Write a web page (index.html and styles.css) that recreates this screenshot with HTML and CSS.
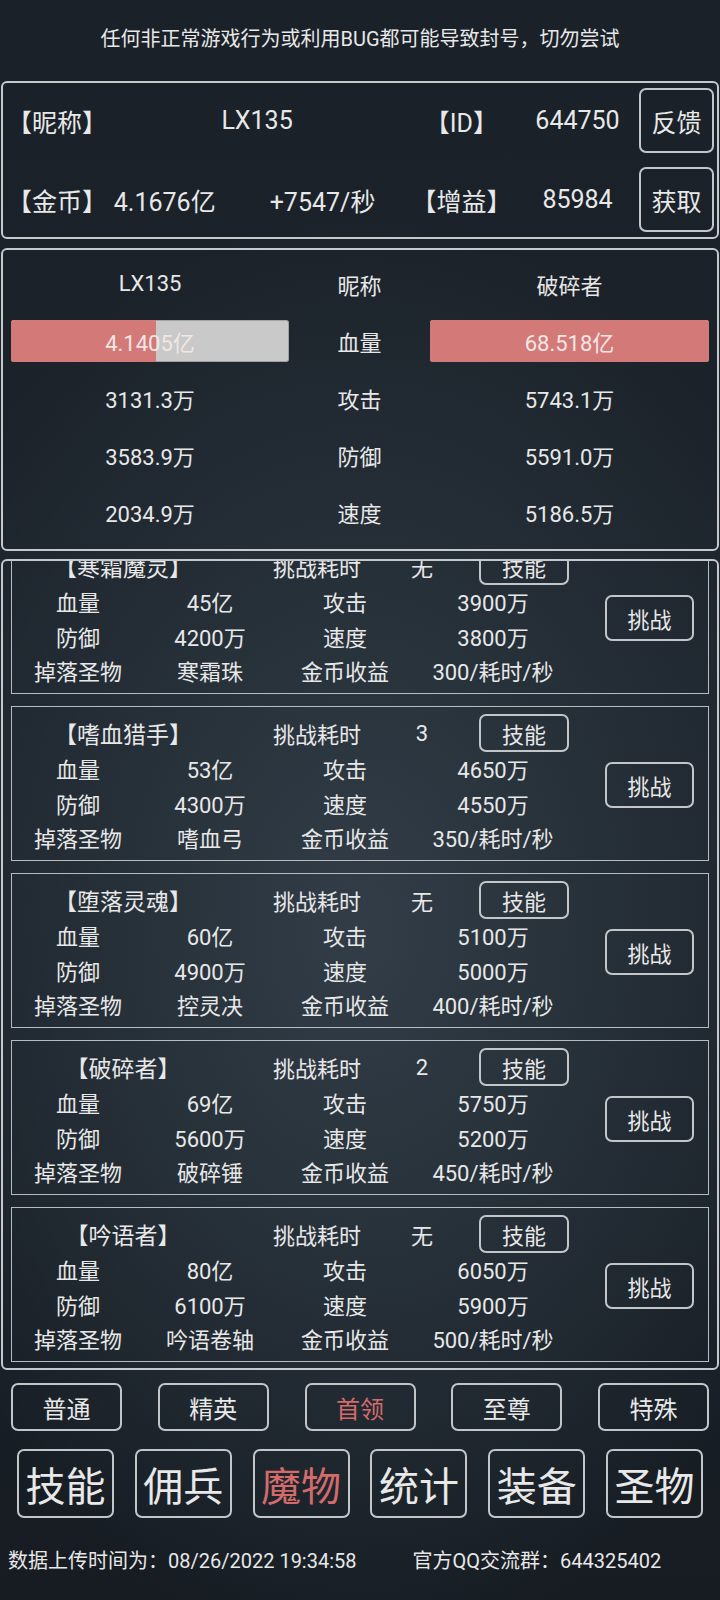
FILE: index.html
```html
<!DOCTYPE html>
<html lang="zh-CN">
<head>
<meta charset="utf-8">
<title>魔物</title>
<link rel="stylesheet" href="styles.css">
</head>
<body>
<div class="page">
  <div class="notice">任何非正常游戏行为或利用BUG都可能导致封号，切勿尝试</div>

  <div class="panel info">
    <div class="info-row">
      <div class="c-label">【昵称】</div>
      <div class="c-wide">LX135</div>
      <div class="c-label2">【ID】</div>
      <div class="c-val2">644750</div>
      <div class="c-btn"><div class="btn info-btn">反馈</div></div>
    </div>
    <div class="info-row">
      <div class="c-label">【金币】</div>
      <div class="c-v1">4.1676亿</div>
      <div class="c-v2">+7547/秒</div>
      <div class="c-label2">【增益】</div>
      <div class="c-val2">85984</div>
      <div class="c-btn"><div class="btn info-btn">获取</div></div>
    </div>
  </div>

  <div class="panel battle">
    <div class="b-cell">LX135</div>
    <div class="b-cell">昵称</div>
    <div class="b-cell">破碎者</div>

    <div class="b-cell"><div class="bar"><div class="bar-fill" style="width:52%"></div><span class="bar-text">4.1405亿</span></div></div>
    <div class="b-cell">血量</div>
    <div class="b-cell"><div class="bar"><div class="bar-fill" style="width:100%"></div><span class="bar-text">68.518亿</span></div></div>

    <div class="b-cell">3131.3万</div>
    <div class="b-cell">攻击</div>
    <div class="b-cell">5743.1万</div>

    <div class="b-cell">3583.9万</div>
    <div class="b-cell">防御</div>
    <div class="b-cell">5591.0万</div>

    <div class="b-cell">2034.9万</div>
    <div class="b-cell">速度</div>
    <div class="b-cell">5186.5万</div>
  </div>

  <div class="panel list">
    <div class="list-scroll">
      <div class="card">
        <div class="card-head">
          <div class="h-name">【寒霜魔灵】</div>
          <div class="h-label">挑战耗时</div>
          <div class="h-val">无</div>
          <div class="btn skill-btn">技能</div>
        </div>
        <div class="card-body">
          <div class="k">血量</div><div class="v">45亿</div><div class="k2">攻击</div><div class="v2">3900万</div>
          <div class="k">防御</div><div class="v">4200万</div><div class="k2">速度</div><div class="v2">3800万</div>
          <div class="k">掉落圣物</div><div class="v">寒霜珠</div><div class="k2">金币收益</div><div class="v2">300/耗时/秒</div>
          <div class="fight-cell"><div class="btn fight-btn">挑战</div></div>
        </div>
      </div>

      <div class="card">
        <div class="card-head">
          <div class="h-name">【嗜血猎手】</div>
          <div class="h-label">挑战耗时</div>
          <div class="h-val">3</div>
          <div class="btn skill-btn">技能</div>
        </div>
        <div class="card-body">
          <div class="k">血量</div><div class="v">53亿</div><div class="k2">攻击</div><div class="v2">4650万</div>
          <div class="k">防御</div><div class="v">4300万</div><div class="k2">速度</div><div class="v2">4550万</div>
          <div class="k">掉落圣物</div><div class="v">嗜血弓</div><div class="k2">金币收益</div><div class="v2">350/耗时/秒</div>
          <div class="fight-cell"><div class="btn fight-btn">挑战</div></div>
        </div>
      </div>

      <div class="card">
        <div class="card-head">
          <div class="h-name">【堕落灵魂】</div>
          <div class="h-label">挑战耗时</div>
          <div class="h-val">无</div>
          <div class="btn skill-btn">技能</div>
        </div>
        <div class="card-body">
          <div class="k">血量</div><div class="v">60亿</div><div class="k2">攻击</div><div class="v2">5100万</div>
          <div class="k">防御</div><div class="v">4900万</div><div class="k2">速度</div><div class="v2">5000万</div>
          <div class="k">掉落圣物</div><div class="v">控灵决</div><div class="k2">金币收益</div><div class="v2">400/耗时/秒</div>
          <div class="fight-cell"><div class="btn fight-btn">挑战</div></div>
        </div>
      </div>

      <div class="card">
        <div class="card-head">
          <div class="h-name">【破碎者】</div>
          <div class="h-label">挑战耗时</div>
          <div class="h-val">2</div>
          <div class="btn skill-btn">技能</div>
        </div>
        <div class="card-body">
          <div class="k">血量</div><div class="v">69亿</div><div class="k2">攻击</div><div class="v2">5750万</div>
          <div class="k">防御</div><div class="v">5600万</div><div class="k2">速度</div><div class="v2">5200万</div>
          <div class="k">掉落圣物</div><div class="v">破碎锤</div><div class="k2">金币收益</div><div class="v2">450/耗时/秒</div>
          <div class="fight-cell"><div class="btn fight-btn">挑战</div></div>
        </div>
      </div>

      <div class="card">
        <div class="card-head">
          <div class="h-name">【吟语者】</div>
          <div class="h-label">挑战耗时</div>
          <div class="h-val">无</div>
          <div class="btn skill-btn">技能</div>
        </div>
        <div class="card-body">
          <div class="k">血量</div><div class="v">80亿</div><div class="k2">攻击</div><div class="v2">6050万</div>
          <div class="k">防御</div><div class="v">6100万</div><div class="k2">速度</div><div class="v2">5900万</div>
          <div class="k">掉落圣物</div><div class="v">吟语卷轴</div><div class="k2">金币收益</div><div class="v2">500/耗时/秒</div>
          <div class="fight-cell"><div class="btn fight-btn">挑战</div></div>
        </div>
      </div>
    </div>
  </div>

  <div class="filters">
    <div class="btn filter-btn">普通</div>
    <div class="btn filter-btn">精英</div>
    <div class="btn filter-btn active">首领</div>
    <div class="btn filter-btn">至尊</div>
    <div class="btn filter-btn">特殊</div>
  </div>

  <div class="nav">
    <div class="btn nav-btn">技能</div>
    <div class="btn nav-btn">佣兵</div>
    <div class="btn nav-btn active">魔物</div>
    <div class="btn nav-btn">统计</div>
    <div class="btn nav-btn">装备</div>
    <div class="btn nav-btn">圣物</div>
  </div>

  <div class="footer">
    <span>数据上传时间为：08/26/2022 19:34:58</span>
    <span>官方QQ交流群：644325402</span>
  </div>
</div>
</body>
</html>
```

FILE: styles.css
```css
html, body {
  margin: 0;
  padding: 0;
}

body {
  width: 720px;
  height: 1600px;
  overflow: hidden;
  color: #e8e8e8;
  font-family: Roboto, "Noto Sans CJK SC", sans-serif;
  background:
    radial-gradient(ellipse 70% 45% at 50% 58%, #323d47 0%, #27313a 45%, rgba(24,31,38,0) 100%),
    linear-gradient(180deg, #1a2129 0%, #1c232b 50%, #161c22 100%);
}

.page {
  display: flex;
  flex-direction: column;
  height: 1600px;
}

.notice {
  height: 81px;
  display: flex;
  align-items: center;
  justify-content: center;
  font-size: 20px;
  box-sizing: border-box;
  padding-bottom: 6px;
}

.panel {
  margin: 0 1px;
  border: 2px solid #c6c9cc;
  border-radius: 6px;
  box-sizing: border-box;
}

.btn {
  border: 2px solid #c3c6c9;
  border-radius: 7px;
  box-sizing: border-box;
  display: flex;
  align-items: center;
  justify-content: center;
}

/* info panel */
.info {
  height: 158px;
  display: flex;
  flex-direction: column;
  justify-content: space-between;
  padding: 5px 0;
}

.info-row {
  display: flex;
  align-items: center;
  font-size: 25px;
  height: 65px;
}

.c-label {
  width: 97px;
  padding-left: 4px;
  box-sizing: border-box;
}

.c-wide {
  width: 310px;
  text-align: center;
  padding-left: 8px;
  box-sizing: border-box;
}

.c-v1 {
  width: 132px;
  text-align: center;
}

.c-v2 {
  width: 178px;
  text-align: center;
  padding-left: 8px;
  box-sizing: border-box;
}

.c-label2 {
  width: 110px;
  text-align: center;
}

.c-val2 {
  width: 124px;
  text-align: center;
}

.c-btn {
  flex: 1;
  display: flex;
  justify-content: flex-end;
  padding-right: 3px;
}

.info-btn {
  width: 75px;
  height: 65px;
  font-size: 25px;
}

/* battle panel */
.battle {
  margin-top: 9px;
  height: 303px;
  display: grid;
  grid-template-columns: 278px 141px 279px;
  grid-auto-rows: 57px;
  padding: 5px 8px 0 8px;
  font-size: 22px;
}

.b-cell {
  display: flex;
  align-items: center;
  justify-content: center;
}

.bar {
  position: relative;
  width: 100%;
  height: 42px;
  background: #c9c9c9;
  border-radius: 3px;
  box-shadow: inset 0 0 0 1px rgba(90, 90, 90, 0.35);
  overflow: hidden;
  display: flex;
  align-items: center;
  justify-content: center;
}

.bar-fill {
  position: absolute;
  left: 0;
  top: 0;
  bottom: 0;
  background: #d37a78;
}

.bar-text {
  position: relative;
  color: #f2e6e6;
}

/* list panel */
.list {
  margin-top: 8px;
  height: 811px;
  overflow: hidden;
  padding: 0 8px;
}

.list-scroll {
  margin-top: -22px;
  display: flex;
  flex-direction: column;
  gap: 12px;
}

.card {
  height: 155px;
  border: 1px solid #b7bcc1;
  box-sizing: border-box;
  font-size: 22px;
  display: flex;
  flex-direction: column;
}

.card-head {
  height: 44px;
  display: flex;
  align-items: center;
  padding-top: 4px;
  box-sizing: content-box;
}

.h-name {
  width: 222px;
  text-align: center;
  font-size: 23px;
}

.h-label {
  width: 166px;
  text-align: center;
}

.h-val {
  width: 44px;
  text-align: center;
}

.skill-btn {
  margin-left: 35px;
  width: 90px;
  height: 38px;
}

.card-body {
  margin-top: -4px;
  display: grid;
  grid-template-columns: 132px 132px 138px 158px 1fr;
  grid-template-rows: repeat(3, 34.5px);
}

.card-body > div {
  display: flex;
  align-items: center;
  justify-content: center;
}

.fight-cell {
  grid-column: 5;
  grid-row: 1 / span 2;
  align-items: flex-start !important;
  justify-content: flex-start !important;
  padding-left: 33px;
  padding-top: 11px;
}

.fight-btn {
  width: 89px;
  height: 46px;
}

/* filters */
.filters {
  margin-top: 13px;
  height: 48px;
  display: flex;
  justify-content: space-between;
  padding: 0 11px;
}

.filter-btn {
  width: 111px;
  height: 48px;
  font-size: 24px;
}

.active {
  color: #d46b6b;
}

/* nav */
.nav {
  margin-top: 18px;
  display: flex;
  justify-content: space-between;
  padding: 0 17px;
}

.nav-btn {
  width: 97px;
  height: 69px;
  font-size: 40px;
}

/* footer */
.footer {
  margin-top: 26px;
  display: flex;
  padding-left: 8px;
  font-size: 20px;
  height: 30px;
  align-items: center;
}

.footer span:last-child {
  margin-left: 56px;
}
```
